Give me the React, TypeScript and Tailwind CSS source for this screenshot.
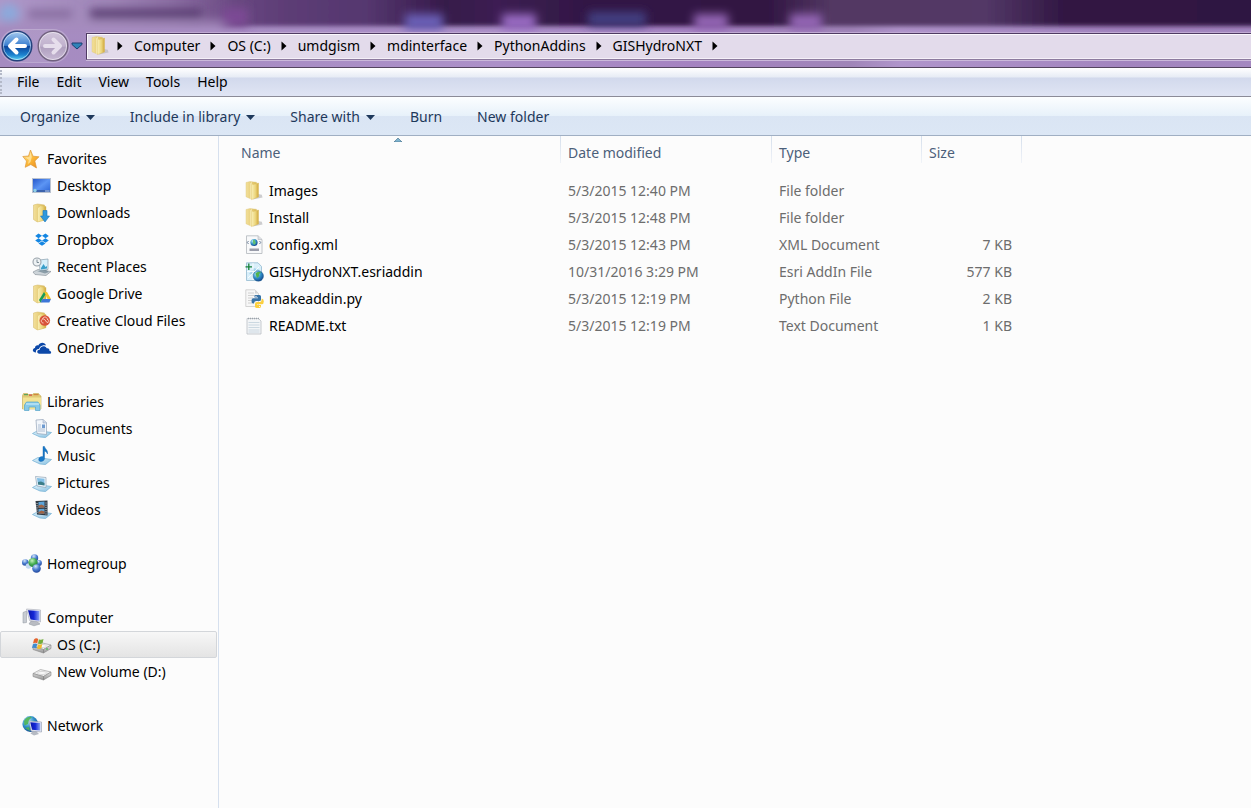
import type { ReactNode } from "react";

interface NavItem {
  label: string;
  icon: ReactNode;
  selected?: boolean;
}

interface NavGroup {
  root: NavItem;
  children: NavItem[];
}

interface FileRow {
  name: string;
  icon: ReactNode;
  modified: string;
  type: string;
  size: string;
}

function Icon({ children }: { children: ReactNode }) {
  return (
    <svg className="size-5 shrink-0" viewBox="0 0 20 20" aria-hidden="true">
      {children}
    </svg>
  );
}

/* gradients shared by all icons */
function IconDefs() {
  return (
    <svg className="absolute size-0" aria-hidden="true">
      <defs>
        <linearGradient id="folderBack" x1="0" x2="1">
          <stop offset="0" stopColor="#f3e09a" />
          <stop offset="1" stopColor="#dcbd5c" />
        </linearGradient>
        <linearGradient id="folderFront" x1="0" x2="1">
          <stop offset="0" stopColor="#faf0b8" />
          <stop offset="0.55" stopColor="#ecd67e" />
          <stop offset="1" stopColor="#cfa73c" />
        </linearGradient>
        <linearGradient id="star" x1="0" x2="1" y2="1">
          <stop offset="0" stopColor="#ffe9a0" />
          <stop offset="0.5" stopColor="#fdbb3a" />
          <stop offset="1" stopColor="#e8861c" />
        </linearGradient>
        <linearGradient id="screen" x1="0" x2="1" y2="1">
          <stop offset="0" stopColor="#2455c8" />
          <stop offset="0.5" stopColor="#5c95f4" />
          <stop offset="1" stopColor="#2a62d4" />
        </linearGradient>
        <linearGradient id="monitor" x1="0" x2="1">
          <stop offset="0" stopColor="#0a16a8" />
          <stop offset="0.5" stopColor="#1426d8" />
          <stop offset="1" stopColor="#8fa6f4" />
        </linearGradient>
        <linearGradient id="tray" x1="0" x2="1" y2="1">
          <stop offset="0" stopColor="#e3f4fc" />
          <stop offset="1" stopColor="#86bfe0" />
        </linearGradient>
        <linearGradient id="metal" x1="0" x2="0" y2="1">
          <stop offset="0" stopColor="#e2e2e2" />
          <stop offset="1" stopColor="#939393" />
        </linearGradient>
        <radialGradient id="globe" cx="0.35" cy="0.3" r="0.8">
          <stop offset="0" stopColor="#b8ecf8" />
          <stop offset="0.5" stopColor="#2f8fc8" />
          <stop offset="1" stopColor="#123f86" />
        </radialGradient>
        <radialGradient id="blueBall" cx="0.4" cy="0.25" r="0.8">
          <stop offset="0" stopColor="#d3e6fb" />
          <stop offset="0.5" stopColor="#4c7fd0" />
          <stop offset="1" stopColor="#1c3f96" />
        </radialGradient>
        <radialGradient id="greenBall" cx="0.4" cy="0.3" r="0.8">
          <stop offset="0" stopColor="#c4f2bd" />
          <stop offset="0.5" stopColor="#45ae50" />
          <stop offset="1" stopColor="#1c7434" />
        </radialGradient>
      </defs>
    </svg>
  );
}

function FolderShape() {
  return (
    <>
      <path d="M1.500 2 5.500 1 12.500 2V17L5 18.800 1.500 16.500Z" fill="url(#folderBack)" stroke="#d3b763" strokeWidth="0.5" />
      <path d="M5.500 5 8.500 2.800 14 3.500v13.300L5.500 19Z" fill="url(#folderFront)" stroke="#d9bc5c" strokeWidth="0.4" />
    </>
  );
}

function FolderIcon() {
  return (
    <Icon>
      <path d="M8 18.500 17.500 16.500 16.800 13.800 13 13Z" fill="#b9b9bc" opacity="0.7" />
      <path d="M1 1.500 5 .5 11.500 1.300V15L6 18 1 15.800Z" fill="url(#folderBack)" stroke="#dcc478" strokeWidth="0.4" />
      <path d="M5.500 2.300 7 1.200 7 17.500 5.500 18Z" fill="#fdf7d2" />
      <path d="M6.500 2.500 8 3.500 13.500 2v14L6.500 18.600Z" fill="url(#folderFront)" stroke="#d8b852" strokeWidth="0.4" />
    </Icon>
  );
}

function StarIcon() {
  return (
    <Icon>
      <path
        d="M8.500 1 11 7.200 17 7.800 12.800 12 14.500 19 8.800 15.500 3.200 18.300 4.500 12 .8 7.500 6.500 7Z"
        fill="url(#star)"
        stroke="#dd9636"
        strokeWidth="0.7"
        strokeLinejoin="round"
      />
      <path d="M8.500 3 9.800 8 8.500 13 6 15l.8-4L3.500 8.500 7.300 8Z" fill="#fff3c4" opacity="0.6" />
    </Icon>
  );
}

function DesktopIcon() {
  return (
    <Icon>
      <rect x="0.500" y="2.500" width="18" height="14" fill="url(#screen)" stroke="#b9c2d0" />
      <path d="M1 14h17v2H1z" fill="#3c63ad" />
      <circle cx="3" cy="14.500" r="1.700" fill="#8fd0e6" />
      <path d="M13 14.500h4.500v1H13z" fill="#b5cdf0" />
    </Icon>
  );
}

function DownloadsIcon() {
  return (
    <Icon>
      <FolderShape />
      <path d="M11 7.500h4v5.500h2.500L13 19 8.500 13H11Z" fill="#2f98dc" stroke="#1875bc" strokeWidth="0.6" />
    </Icon>
  );
}

function DropboxIcon() {
  return (
    <Icon>
      <path
        d="M6.500 3.500 10 5.800 6.500 8.200 3.200 6ZM13.500 3.500 16.800 6 13.500 8.200 10 5.800ZM3.200 10.500 6.500 8.200 10 10.600 6.500 12.800ZM16.800 10.500 13.500 8.200 10 10.600 13.500 12.800ZM6.500 13.500 10 11.300 13.500 13.500 10 15.800Z"
        fill="#1486e2"
      />
    </Icon>
  );
}

function RecentIcon() {
  return (
    <Icon>
      <path d="M1 15 6 12.500 19 14.500 14 18.500 3 17.500Z" fill="#cdd4d9" stroke="#808a92" strokeWidth="0.6" />
      <path d="M7 3 16 2v10.500L8 13.500Z" fill="#d8f0fb" stroke="#8a9fae" strokeWidth="0.7" />
      <path d="m9 11 2.500-4 2 3 1.500-1v2.500l-6 1Z" fill="#3a9fca" />
      <path d="M5 14 14 13l3 2-4 1.500Z" fill="#5f7887" opacity="0.6" />
      <circle cx="5" cy="5" r="4" fill="#eef2f4" stroke="#99a2aa" strokeWidth="1.100" />
      <path d="M5 2.500v3h2" fill="none" stroke="#657783" strokeWidth="0.8" />
    </Icon>
  );
}

function GoogleDriveIcon() {
  return (
    <Icon>
      <FolderShape />
      <path d="M12 8h3l4 7h-3.500Z" fill="#f4c52c" />
      <path d="M12 8 7 16l1.500 2.500 5-8Z" fill="#189c58" />
      <path d="M10.500 15H19l-1.700 3.500H8.500Z" fill="#3d76d8" />
    </Icon>
  );
}

function CreativeCloudIcon() {
  return (
    <Icon>
      <FolderShape />
      <circle cx="12.800" cy="9.500" r="5.300" fill="#d8523a" />
      <path
        d="M11.500 12c-3 0-3-4 0-4 2 0 2.500 4 4.500 3.500 1.500-1 .5-3.500-1-3M10.500 8c1-2.800 4.500-2.500 5 .5"
        fill="none"
        stroke="#fbd9ca"
        strokeWidth="0.9"
      />
    </Icon>
  );
}

function OneDriveIcon() {
  return (
    <Icon>
      <path d="M4 14.500C0 14.500 0 10.500 3 10c0-2 1.800-3 3.300-2.500C8 3.500 13 4 14 7.500 9.500 6.500 7.500 9.500 7 11c-2.500 0-3.500 1.500-3 3.500Z" fill="#0c48a8" />
      <path d="M7.500 15.800c-3-.2-3-4 .2-4 .3-3.500 5-5 7-1.600 2-.3 3 .8 2.700 2.500 2.500.5 2.200 3.100.1 3.100Z" fill="#0c48a8" />
    </Icon>
  );
}

function LibrariesIcon() {
  return (
    <Icon>
      <path d="M.5 3.500 1.500 1.500h4l1 1h4l1-1h5l1 1.500 1.500 1V17H.5Z" fill="#e0c974" stroke="#c4ab55" strokeWidth="0.600" />
      <path d="M2 2h4v1.200H2z" fill="#5fa45a" />
      <path d="M7 2.500h3v1.300H7z" fill="#d2584a" />
      <path d="M11.500 2h5v1.200h-5z" fill="#d1893e" />
      <path d="M1 5.500h18v11.500H1z" fill="#f3e394" />
      <path d="M2.500 13 4.500 10h11.500l2 3v5.500h-4.500V15H7v3.500H2.500Z" fill="#87c9e8" stroke="#55a3c9" strokeWidth="0.700" />
      <path d="M4 12h13" stroke="#d8f2fc" />
    </Icon>
  );
}

function Tray() {
  return <path d="M.5 14.500 6 11.500 19.500 13.500 13.500 18.500 8 18Z" fill="url(#tray)" stroke="#6faed2" strokeWidth="0.7" />;
}

function DocumentsIcon() {
  return (
    <Icon>
      <Tray />
      <path d="M4 1 11 .5l3.500 3v12L5 14.500Z" fill="#f2f6fb" stroke="#94a3b8" strokeWidth="0.700" />
      <path d="M11 .5v3.500h3.500" fill="#cdd9ea" stroke="#94a3b8" strokeWidth="0.5" />
      <path d="M6 6h3M6 8h3M6 10h7M6 12h7" stroke="#9fb2cc" strokeWidth="0.8" />
      <path d="M10 5.500h3V9h-3z" fill="#6f9bd0" />
    </Icon>
  );
}

function MusicIcon() {
  return (
    <Icon>
      <Tray />
      <path d="M11 .5h1.500c.5 2.500 3.800 3.500 3 7.500-.5-1.500-1.500-2.500-3-2.800V13c-.5 3-5.800 3.500-5.800.5 0-2.300 2.500-3.300 4.300-2.800Z" fill="#1878c8" stroke="#0d5da6" strokeWidth="0.4" />
    </Icon>
  );
}

function PicturesIcon() {
  return (
    <Icon>
      <Tray />
      <path d="M3.500 3.500 14 4.500v10L5 13Z" fill="#edf4fa" stroke="#8fa4b5" strokeWidth="0.7" />
      <path d="m5 5 7.500.8v6.500L6 11.500Z" fill="#82bfe6" />
      <path d="m6 9 3-.5 3.500 1.500v2.500L6 11.500Z" fill="#3c7d88" />
    </Icon>
  );
}

function VideosIcon() {
  return (
    <Icon>
      <Tray />
      <path d="M3.500 1 15.500 .5v15L5 14.500Z" fill="#303a44" />
      <path d="M6.500 2 12.500 1.500V7.500l-6 .2ZM6.500 9l6-.2v5l-6-.3Z" fill="#5da4d8" />
      <path d="m6.500 5.500 3-1 3 1.500v1.500l-6 .2ZM6.500 12l3-1.500 3 1v2.300l-6-.3Z" fill="#a06444" />
      <path d="M5 3v11M14 2.500v12" stroke="#d6dde3" strokeWidth="1" strokeDasharray="1 1.200" />
    </Icon>
  );
}

function HomegroupIcon() {
  return (
    <Icon>
      <circle cx="12.500" cy="4" r="3.700" fill="url(#blueBall)" />
      <circle cx="3.300" cy="8.500" r="3.300" fill="url(#blueBall)" />
      <circle cx="17" cy="9" r="2.900" fill="url(#blueBall)" />
      <circle cx="6.500" cy="12" r="2.800" fill="#c3d9f2" />
      <circle cx="11" cy="8.500" r="4.600" fill="url(#greenBall)" />
      <circle cx="14.500" cy="14.500" r="4.300" fill="url(#blueBall)" />
    </Icon>
  );
}

function ComputerIcon() {
  return (
    <Icon>
      <path d="M1 4.500 4.500 3v11.500l-3.500.5Z" fill="#c8ccd2" stroke="#8f959d" strokeWidth="0.5" />
      <path d="M9 13h5l4 3-6 1.800L7 16Z" fill="#b9bcc2" stroke="#8d929b" strokeWidth="0.5" />
      <path d="M4.500 1 18.500 2V14L7.500 12.500Z" fill="#e9ebf2" stroke="#a4a8b4" strokeWidth="0.6" />
      <path d="M6 2.200 17.500 3v9.700L8.500 11.500Z" fill="url(#monitor)" />
    </Icon>
  );
}

function DriveBody() {
  return (
    <>
      <path d="M1 11.500 8.500 7.500 19 10 11.500 14.500Z" fill="#ededed" stroke="#969696" strokeWidth="0.6" />
      <path d="M1 11.500 11.500 14.500v3.500L1 14.500ZM11.500 14.500 19 10v3.500L11.500 18Z" fill="url(#metal)" stroke="#868686" strokeWidth="0.6" />
      <ellipse cx="10" cy="11" rx="4.500" ry="1.500" fill="#fafafa" stroke="#bababa" strokeWidth="0.5" />
    </>
  );
}

function SystemDriveIcon() {
  return (
    <Icon>
      <DriveBody />
      <circle cx="15" cy="14" r="0.900" fill="#4ec157" />
      <path d="M2 4.500Q4 2.500 6.200 4L5.300 8.300Q3 7 1 8.500Z" fill="#e5632e" />
      <path d="M6.900 4.200Q9 5.500 11.500 4l-1 4.300Q8.500 9.500 6 8.500Z" fill="#72ad3a" />
      <path d="M.9 9.200Q3 8 5.200 9l-.9 4.300Q2 12.300 0 13Z" fill="#3e8bd0" />
      <path d="M5.900 9.300Q8 10.500 10.300 9l-.9 4.300Q7 14.500 5 13.500Z" fill="#f0bb2e" />
    </Icon>
  );
}

function DriveIcon() {
  return (
    <Icon>
      <DriveBody />
    </Icon>
  );
}

function NetworkIcon() {
  return (
    <Icon>
      <circle cx="8.300" cy="8" r="7.900" fill="url(#globe)" />
      <path d="M2 5q3-5 8-4L7 4 6 8 2.500 9.500ZM3 12l4-1 1 4Z" fill="#4fb552" opacity="0.9" />
      <path d="M11 15h3l3 3-5 1.500-3.500-2Z" fill="#b5bac3" />
      <path d="M7 5 19.500 6V16L9 15Z" fill="#e8ebf3" stroke="#8f98ad" strokeWidth="0.6" />
      <path d="m8.300 6.300 10 .8v7.500L10 13.700Z" fill="url(#monitor)" />
    </Icon>
  );
}

function XmlIcon() {
  return (
    <Icon>
      <path d="M1.500.8H13L17 4.500v14H1.500Z" fill="#f8f9fa" stroke="#b3b7bc" strokeWidth="0.8" />
      <path d="M13 .8V4.500h4" fill="#dde0e3" stroke="#b3b7bc" strokeWidth="0.6" />
      <circle cx="9" cy="7.500" r="3.600" fill="url(#globe)" />
      <path d="M8 5q2-1 2 1l1 2-2 2-1-2Z" fill="#62bf71" />
      <path d="m3.500 6-1.200 1.500L3.500 9M14.500 6l1.200 1.500L14.500 9" fill="none" stroke="#5e738f" strokeWidth="0.900" />
      <path d="M4.500 13.500H14v2.500H4.500z" fill="#9a9daa" />
    </Icon>
  );
}

function AddInIcon() {
  return (
    <Icon>
      <path d="M1.500.8H13L16.500 4.500v14H1.500Z" fill="#d9effa" stroke="#93bad0" strokeWidth="0.8" />
      <path d="m4 12 5-6 6 2-4 6Z" fill="#a7d5ec" />
      <path d="M3 16 14 5M8 1v17M2 9.500h14" stroke="#fff" strokeWidth="0.8" />
      <path d="M3.800 1.500v6.500M.5 4.800h6.500" stroke="#178238" strokeWidth="1.300" />
      <circle cx="13.300" cy="14" r="5.200" fill="url(#globe)" stroke="#194e80" strokeWidth="0.4" />
      <path d="M10.500 11.500q2.500-3 5.500-1L14 12l.3 2L12 16Z" fill="#52b34d" />
    </Icon>
  );
}

function PythonIcon() {
  return (
    <Icon>
      <path d="M.8.8H10L13.500 4.500v13H.8Z" fill="#f7f7f7" stroke="#cacaca" strokeWidth="0.800" />
      <path d="M10 .8v3.700h3.500" fill="#d5d5d5" />
      <path d="M3 4h6M3 6.500h8M3 9h5M3 11.500h4M3 14h4" stroke="#d0d0d0" />
      <path d="M10.500 6H14.500q1.500 0 1.500 1.500v3q0 1.500-1.500 1.500H11q-2 0-2 2.500H8Q6.500 14.500 6.500 12T8 9.300h5V8.500H9.500V7q0-1 1-1Z" fill="#3973a6" />
      <path d="M16.800 9.500q2 .3 2 3t-2 2.700h-4.500v.7H16v1.500q0 1.600-3 1.600t-3-1.600v-2.400q0-2 2-2h3q1.500 0 1.500-1.700Z" fill="#fbcf3e" />
      <circle cx="11" cy="7.400" r="0.600" fill="#fff" />
      <circle cx="14.600" cy="17.500" r="0.600" fill="#fff" />
    </Icon>
  );
}

function TextIcon() {
  return (
    <Icon>
      <path d="M2 2.500h11.500L16 5v13H2Z" fill="#f3f5f7" stroke="#b9bec4" strokeWidth="0.800" />
      <path d="M3 2.500h11" stroke="#9ba3ab" strokeWidth="1.400" strokeDasharray="1 1" />
      <path d="M3.500 6.500h11M3.500 9h11M3.500 11.500h11M3.500 14h11M3.500 16h11" stroke="#c6d5de" strokeWidth="0.900" />
    </Icon>
  );
}

const NAV_GROUPS: NavGroup[] = [
  {
    root: { label: "Favorites", icon: <StarIcon /> },
    children: [
      { label: "Desktop", icon: <DesktopIcon /> },
      { label: "Downloads", icon: <DownloadsIcon /> },
      { label: "Dropbox", icon: <DropboxIcon /> },
      { label: "Recent Places", icon: <RecentIcon /> },
      { label: "Google Drive", icon: <GoogleDriveIcon /> },
      { label: "Creative Cloud Files", icon: <CreativeCloudIcon /> },
      { label: "OneDrive", icon: <OneDriveIcon /> },
    ],
  },
  {
    root: { label: "Libraries", icon: <LibrariesIcon /> },
    children: [
      { label: "Documents", icon: <DocumentsIcon /> },
      { label: "Music", icon: <MusicIcon /> },
      { label: "Pictures", icon: <PicturesIcon /> },
      { label: "Videos", icon: <VideosIcon /> },
    ],
  },
  { root: { label: "Homegroup", icon: <HomegroupIcon /> }, children: [] },
  {
    root: { label: "Computer", icon: <ComputerIcon /> },
    children: [
      { label: "OS (C:)", icon: <SystemDriveIcon />, selected: true },
      { label: "New Volume (D:)", icon: <DriveIcon /> },
    ],
  },
  { root: { label: "Network", icon: <NetworkIcon /> }, children: [] },
];

const FILES: FileRow[] = [
  { name: "Images", icon: <FolderIcon />, modified: "5/3/2015 12:40 PM", type: "File folder", size: "" },
  { name: "Install", icon: <FolderIcon />, modified: "5/3/2015 12:48 PM", type: "File folder", size: "" },
  { name: "config.xml", icon: <XmlIcon />, modified: "5/3/2015 12:43 PM", type: "XML Document", size: "7 KB" },
  { name: "GISHydroNXT.esriaddin", icon: <AddInIcon />, modified: "10/31/2016 3:29 PM", type: "Esri AddIn File", size: "577 KB" },
  { name: "makeaddin.py", icon: <PythonIcon />, modified: "5/3/2015 12:19 PM", type: "Python File", size: "2 KB" },
  { name: "README.txt", icon: <TextIcon />, modified: "5/3/2015 12:19 PM", type: "Text Document", size: "1 KB" },
];

const PATH = ["Computer", "OS (C:)", "umdgism", "mdinterface", "PythonAddins", "GISHydroNXT"];
const MENUS = ["File", "Edit", "View", "Tools", "Help"];
const COMMANDS = [
  { label: "Organize", menu: true },
  { label: "Include in library", menu: true },
  { label: "Share with", menu: true },
  { label: "Burn", menu: false },
  { label: "New folder", menu: false },
];
const COLUMNS = ["Name", "Date modified", "Type", "Size"];

function Glass() {
  return (
    <svg className="absolute inset-0 size-full" viewBox="0 0 1251 67" preserveAspectRatio="none" aria-hidden="true">
      <defs>
        <linearGradient id="glassTop" x1="0" x2="1">
          <stop offset="0" stopColor="#b09acb" />
          <stop offset="0.1" stopColor="#9f86b7" />
          <stop offset="0.15" stopColor="#8a6da2" />
          <stop offset="0.2" stopColor="#684780" />
          <stop offset="0.24" stopColor="#5c3c75" />
          <stop offset="0.3" stopColor="#55376f" />
          <stop offset="0.36" stopColor="#361a4a" />
          <stop offset="0.4" stopColor="#3c1f52" />
          <stop offset="0.47" stopColor="#321745" />
          <stop offset="0.61" stopColor="#311643" />
          <stop offset="0.66" stopColor="#533863" />
          <stop offset="0.78" stopColor="#523766" />
          <stop offset="0.84" stopColor="#311743" />
          <stop offset="1" stopColor="#2f1542" />
        </linearGradient>
        <linearGradient id="glassBase" x1="0" x2="1">
          <stop offset="0" stopColor="#a58bc0" />
          <stop offset="0.4" stopColor="#ac90c8" />
          <stop offset="0.55" stopColor="#a583c1" />
          <stop offset="0.68" stopColor="#a085b8" />
          <stop offset="0.72" stopColor="#b095cb" />
          <stop offset="0.9" stopColor="#a284be" />
          <stop offset="1" stopColor="#a488c0" />
        </linearGradient>
        <filter id="soft" x="-20%" y="-50%" width="140%" height="200%">
          <feGaussianBlur stdDeviation="5" />
        </filter>
        <filter id="edge" x="-5%" y="-50%" width="110%" height="200%">
          <feGaussianBlur stdDeviation="2" />
        </filter>
      </defs>
      <rect width="1251" height="67" fill="url(#glassBase)" />
      <rect x="-20" y="-20" width="1291" height="46" fill="url(#glassTop)" filter="url(#edge)" />
      <g filter="url(#soft)">
        <circle cx="9" cy="14" r="10" fill="#8aaadd" />
        <rect x="28" y="10" width="44" height="8" fill="#84699c" />
        <rect x="90" y="9" width="112" height="10" fill="#5a3d72" />
        <rect x="0" y="21" width="230" height="8" fill="#a58bbd" />
        <rect x="222" y="8" width="26" height="18" fill="#7c4a94" />
        <rect x="405" y="14" width="38" height="16" fill="#6a60b8" />
        <rect x="502" y="14" width="34" height="16" fill="#9a6cc4" />
        <rect x="588" y="12" width="58" height="14" fill="#433f82" />
        <rect x="694" y="14" width="34" height="16" fill="#9466b6" />
        <rect x="790" y="14" width="32" height="16" fill="#9466b6" />
      </g>
    </svg>
  );
}

function BackArrow({ disabled }: { disabled?: boolean }) {
  return (
    <svg className="size-8" viewBox="0 0 32 32" aria-hidden="true">
      <defs>
        <linearGradient id="navBlue" x1="0" x2="0" y2="1">
          <stop offset="0" stopColor="#a9cdf0" />
          <stop offset="0.48" stopColor="#3b7fd0" />
          <stop offset="0.52" stopColor="#0c459c" />
          <stop offset="0.8" stopColor="#1c82cf" />
          <stop offset="1" stopColor="#63dcfa" />
        </linearGradient>
        <linearGradient id="navGrey" x1="0" x2="0" y2="1">
          <stop offset="0" stopColor="#d2c6dc" />
          <stop offset="0.5" stopColor="#c0b1cd" />
          <stop offset="0.55" stopColor="#b0a0bf" />
          <stop offset="1" stopColor="#c9bbd6" />
        </linearGradient>
      </defs>
      <circle cx="16" cy="16" r="14.800" fill={disabled ? "url(#navGrey)" : "url(#navBlue)"} stroke={disabled ? "#71627f" : "#24427c"} strokeWidth="1.400" />
      <circle cx="16" cy="16" r="13.600" fill="none" stroke="#fff" strokeOpacity="0.5" />
      <path
        d={disabled ? "M8 16H22M16.500 9.500 23 16 16.500 22.500" : "M24 16H10M15.500 9.500 9 16 15.500 22.500"}
        fill="none"
        stroke={disabled ? "#e6deec" : "#fff"}
        strokeWidth="4"
        strokeLinecap="round"
        strokeLinejoin="round"
      />
    </svg>
  );
}

function Chevron() {
  return (
    <svg className="h-2.5 w-1.5 shrink-0" viewBox="0 0 6 10" aria-hidden="true">
      <path d="M.5.500 5.500 5 .5 9.500Z" fill="#000" />
    </svg>
  );
}

function AddressBar() {
  return (
    <header className="relative flex h-[67px] items-end pb-[5px]">
      <Glass />
      <div className="relative flex w-full items-center">
        <div className="flex w-[86px] shrink-0 items-center gap-0.5 pl-px">
          <div className="flex gap-1 rounded-full bg-white/10 shadow-[0_0_0_1px_rgba(255,255,255,0.25)]">
            <button type="button" aria-label="Back">
              <BackArrow />
            </button>
            <button type="button" aria-label="Forward" disabled>
              <BackArrow disabled />
            </button>
          </div>
          <button type="button" aria-label="Recent pages">
            <svg className="h-2 w-3" viewBox="0 0 12 8" aria-hidden="true">
              <path d="M1 1h10v1.500L6 7 1 2.500Z" fill="#2f83b8" stroke="#1b3f73" />
            </svg>
          </button>
        </div>
        <nav
          aria-label="Address"
          className="flex h-[27px] flex-1 items-center border border-r-0 border-[#4f3b63] border-b-[#8d7a9f] bg-[#e3dbeb] pl-1 shadow-[inset_1px_1px_0_#fbf8fd,inset_0_-1px_0_#f5f0f8,0_-1px_0_#c0a9d3,0_1px_0_#cbb9da]"
        >
          <FolderIcon />
          <ol className="flex items-center gap-[11px] pl-1.5 text-black">
            <li className="flex">
              <Chevron />
            </li>
            {PATH.map((part) => (
              <li className="flex items-center gap-2.5" key={part}>
                <button type="button">{part}</button>
                <Chevron />
              </li>
            ))}
          </ol>
        </nav>
      </div>
    </header>
  );
}

function MenuBar() {
  return (
    <div className="flex h-[30px] items-center border-y border-t-[#55455f] border-b-[#8b8b97] bg-[linear-gradient(to_bottom,#ffffff_0,#e7ecf5_9px,#d2d9ec_10px,#e0e5f4_100%)]">
      <div className="h-6 border-l-2 border-dotted border-[#b4b9c8]" />
      <div className="flex gap-[17px] pl-[15px] text-black" role="menubar">
        {MENUS.map((menu) => (
          <button type="button" role="menuitem" key={menu}>
            {menu}
          </button>
        ))}
      </div>
    </div>
  );
}

function CommandBar() {
  return (
    <div className="flex h-[39px] items-center gap-[35px] border-b border-[#a0afc3] bg-[linear-gradient(to_bottom,#fcfeff_0,#e7f1fa_19px,#dae5f4_19px,#dce7f5_100%)] pt-0.5 pl-5 text-[#1e395b]">
      {COMMANDS.map((command) => (
        <button className="flex items-center gap-1.5" type="button" key={command.label}>
          {command.label}
          {command.menu && (
            <svg className="h-[5px] w-[9px]" viewBox="0 0 9 5" aria-hidden="true">
              <path d="M0 0h9L4.500 5Z" fill="#1e395b" />
            </svg>
          )}
        </button>
      ))}
    </div>
  );
}

function NavRow({ item, nested }: { item: NavItem; nested?: boolean }) {
  return (
    <a
      className={`flex h-[27px] items-center gap-[5px] border ${nested ? "pl-[31px]" : "pl-[21px]"} ${
        item.selected
          ? "rounded-xs border-[#d3d6da] bg-linear-to-b from-[#f7f7f7] to-[#e4e4e4]"
          : "border-transparent"
      }`}
      href="#"
    >
      {item.icon}
      {item.label}
    </a>
  );
}

function NavigationPane() {
  return (
    <nav
      aria-label="Folders"
      className="flex w-[219px] shrink-0 flex-col gap-[27px] border-r border-[#d6e0ee] py-[9px] pr-px text-black"
    >
      {NAV_GROUPS.map((group) => (
        <div key={group.root.label}>
          <NavRow item={group.root} />
          {group.children.map((item) => (
            <NavRow item={item} nested key={item.label} />
          ))}
        </div>
      ))}
    </nav>
  );
}

function FileTable() {
  return (
    <main className="flex-1 pl-[15px]">
      <table className="w-[788px] table-fixed text-left text-[#6d6d6d]">
        <colgroup>
          <col className="w-[327px]" />
          <col className="w-[211px]" />
          <col className="w-[150px]" />
          <col className="w-[100px]" />
        </colgroup>
        <thead>
          <tr className="h-[41px] align-top">
            {COLUMNS.map((column) => (
              <th className="relative p-0 font-normal text-[#4c607a]" key={column}>
                <div className="flex h-[27px] items-end">
                  <span className="flex-1 pl-[7px]">{column}</span>
                  <span className="h-full w-px bg-linear-to-b from-[#d5dfec] to-[#f0f3f8]" />
                </div>
                {column === "Name" && (
                  <svg className="absolute top-0.5 left-1/2 h-1 w-2 -translate-x-1/2" viewBox="0 0 8 4" aria-hidden="true">
                    <path d="M0 4 4 0l4 4Z" fill="#7fb4cf" stroke="#3c6885" strokeWidth="0.6" />
                  </svg>
                )}
              </th>
            ))}
          </tr>
        </thead>
        <tbody>
          {FILES.map((file) => (
            <tr className="h-[27px]" key={file.name}>
              <td className="p-0 pl-[11px] text-black">
                <div className="flex items-center gap-1">
                  {file.icon}
                  {file.name}
                </div>
              </td>
              <td className="p-0 pl-[7px]">{file.modified}</td>
              <td className="p-0 pl-[7px]">{file.type}</td>
              <td className="p-0 pr-2.5 text-right">{file.size}</td>
            </tr>
          ))}
        </tbody>
      </table>
    </main>
  );
}

export default function App() {
  return (
    <div className="flex min-h-screen flex-col overflow-hidden bg-[#fcfcfc] font-['Noto_Sans','Open_Sans',sans-serif] text-[14px] leading-5 whitespace-nowrap">
      <IconDefs />
      <AddressBar />
      <MenuBar />
      <CommandBar />
      <div className="flex flex-1">
        <NavigationPane />
        <FileTable />
      </div>
    </div>
  );
}
